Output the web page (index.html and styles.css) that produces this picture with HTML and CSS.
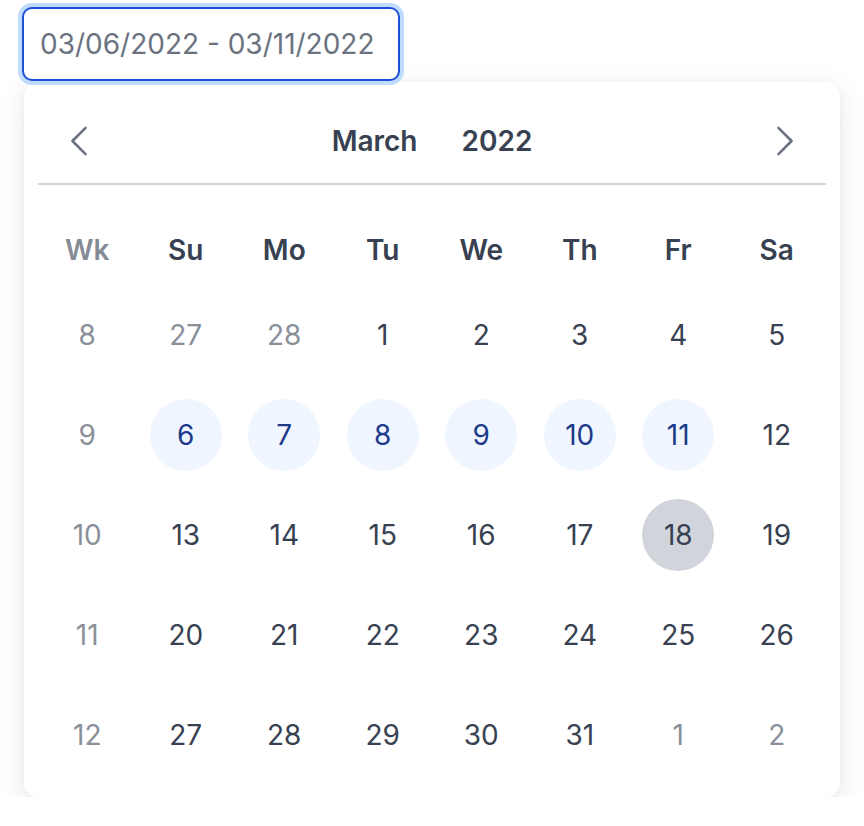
FILE: index.html
```html
<!DOCTYPE html>
<html>
<head>
<meta charset="utf-8">
<link rel="stylesheet" href="styles.css">
</head>
<body>
<div class="wrap">
  <div class="input">03/06/2022 - 03/11/2022</div>
  <div class="popup">
    <div class="header">
      <button class="nav"><svg width="42" height="42" viewBox="0 0 24 24" fill="none" stroke="#6b7280" stroke-width="1.5" stroke-linecap="round" stroke-linejoin="round"><path d="M15.75 19.5L8.25 12l7.5-7.5"/></svg></button>
      <div class="title"><span>March</span><span>2022</span></div>
      <button class="nav"><svg width="42" height="42" viewBox="0 0 24 24" fill="none" stroke="#6b7280" stroke-width="1.5" stroke-linecap="round" stroke-linejoin="round"><path d="M8.25 4.5l7.5 7.5-7.5 7.5"/></svg></button>
    </div>
    <div class="grid">
      <div class="wd wk">Wk</div><div class="wd">Su</div><div class="wd">Mo</div><div class="wd">Tu</div><div class="wd">We</div><div class="wd">Th</div><div class="wd">Fr</div><div class="wd">Sa</div>

      <div class="c wkn">8</div><div class="c out"><span>27</span></div><div class="c out"><span>28</span></div><div class="c"><span>1</span></div><div class="c"><span>2</span></div><div class="c"><span>3</span></div><div class="c"><span>4</span></div><div class="c"><span>5</span></div>

      <div class="c wkn">9</div><div class="c sel"><span>6</span></div><div class="c sel"><span>7</span></div><div class="c sel"><span>8</span></div><div class="c sel"><span>9</span></div><div class="c sel"><span>10</span></div><div class="c sel"><span>11</span></div><div class="c"><span>12</span></div>

      <div class="c wkn">10</div><div class="c"><span>13</span></div><div class="c"><span>14</span></div><div class="c"><span>15</span></div><div class="c"><span>16</span></div><div class="c"><span>17</span></div><div class="c today"><span>18</span></div><div class="c"><span>19</span></div>

      <div class="c wkn">11</div><div class="c"><span>20</span></div><div class="c"><span>21</span></div><div class="c"><span>22</span></div><div class="c"><span>23</span></div><div class="c"><span>24</span></div><div class="c"><span>25</span></div><div class="c"><span>26</span></div>

      <div class="c wkn">12</div><div class="c"><span>27</span></div><div class="c"><span>28</span></div><div class="c"><span>29</span></div><div class="c"><span>30</span></div><div class="c"><span>31</span></div><div class="c out"><span>1</span></div><div class="c out"><span>2</span></div>
    </div>
  </div>
</div>
</body>
</html>
```

FILE: styles.css
```css
* { box-sizing: border-box; }
html, body { margin: 0; background: #fff; }
body {
  font-family: Inter, "Noto Sans", sans-serif;
  color: #374151;
}
.wrap {
  padding: 7px 0 0 22px;
}
.input {
  width: 378px;
  height: 74px;
  border: 2px solid #1d4ed8;
  border-radius: 10px;
  box-shadow: 0 0 0 4px #bfdbfe;
  padding: 0 0 0 16px;
  display: flex;
  align-items: center;
  font-size: 28px;
  color: #6b7280;
  background: #fff;
  position: relative;
  z-index: 1;
}
.popup {
  margin: 1px 0 0 2px;
  width: 816px;
  height: 715px;
  background: #fff;
  border-radius: 14px;
  box-shadow: 0 6px 30px rgba(0,0,0,0.09), 0 1px 6px rgba(0,0,0,0.04);
  padding: 37px 14px 0 14px;
}
.header {
  display: flex;
  align-items: center;
  justify-content: space-between;
  height: 44px;
  padding: 0 20px;
  margin-bottom: 20px;
}
.nav {
  border: 0;
  background: none;
  padding: 0;
  width: 42px;
  height: 42px;
  display: flex;
  align-items: center;
  justify-content: center;
  cursor: pointer;
}
.title {
  display: flex;
  gap: 44px;
  font-size: 28px;
  font-weight: 600;
  color: #374151;
}
.grid {
  border-top: 2px solid #d1d5db;
  padding-top: 30px;
  display: grid;
  grid-template-columns: repeat(8, 1fr);
  grid-auto-rows: 100px;
  grid-template-rows: 70px;
}
.wd {
  display: flex;
  align-items: center;
  justify-content: center;
  font-size: 28px;
  font-weight: 600;
  color: #374151;
}
.wd.wk { color: #858b95; }
.c {
  display: flex;
  align-items: center;
  justify-content: center;
  font-size: 28px;
  color: #374151;
}
.c span {
  width: 72px;
  height: 72px;
  border-radius: 50%;
  display: flex;
  align-items: center;
  justify-content: center;
}
.c.wkn, .c.out { color: #8a9099; }
.c.sel span { background: #eff6ff; color: #1e3a8a; }
.c.today span { background: #d1d5db; }
```
